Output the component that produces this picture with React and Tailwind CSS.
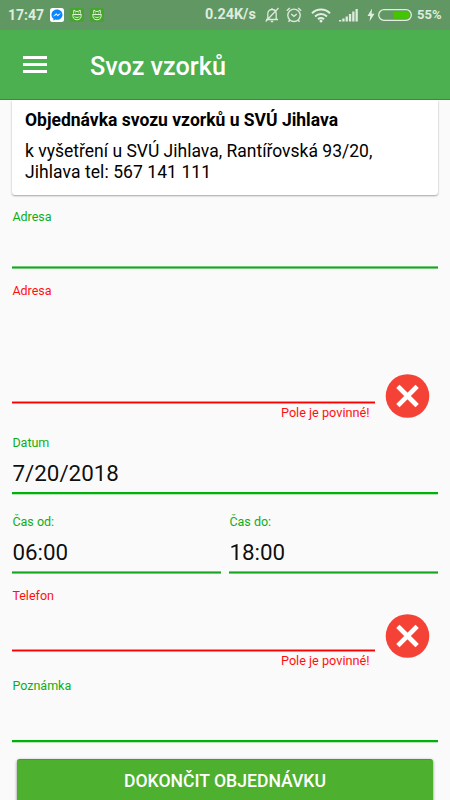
import clsx from "clsx";

function Underline({ error, solid }) {
  return (
    <div
      className={clsx(
        "h-[3px] shrink-0",
        error && "border-y border-[#ff8484] bg-[#ff0000]",
        !error && solid && "border-b border-[#b5e5b7] bg-[#00b00c]",
        !error && !solid && "border-y border-[#72cc77] bg-[#16a51e]"
      )}
    />
  );
}

function Field({ label, value, error, solid, className }) {
  return (
    <div className={clsx("flex flex-col", className)}>
      <span
        className={clsx(
          "h-4 pl-[0.4px] text-[12.5px] leading-4 whitespace-nowrap",
          error ? "text-[#ff1010]" : "text-[#0cae18]"
        )}
      >
        {label}
      </span>
      <div className="flex-1 pt-2 pl-[0.4px] text-[22.4px] leading-7 text-black/95">{value}</div>
      <Underline error={error} solid={solid} />
    </div>
  );
}

function RequiredField({ label, className, iconClassName }) {
  return (
    <div className={clsx("flex items-end", className)}>
      <div className="flex h-full w-[363px] flex-col">
        <Field label={label} error className="flex-1" />
        <span className="h-[18px] pr-[5.5px] text-right text-[12.7px] leading-[18px] text-[#ff1010]">
          Pole je povinné!
        </span>
      </div>
      <svg viewBox="-0.5 0 45 44" className={clsx("ml-[10px] h-11 w-[45px]", iconClassName)}>
        <circle cx="22" cy="22" r="21.8" fill="#f44336" />
        <path
          d="M14 14l16 16M30 14L14 30"
          stroke="#fff"
          strokeWidth="4.6"
          strokeLinecap="square"
          strokeLinejoin="round"
        />
      </svg>
    </div>
  );
}

function MessengerIcon() {
  return (
    <svg viewBox="0 0 14 14" className="h-[14px] w-[14px]">
      <rect width="14" height="14" rx="2.5" fill="#fff" />
      <path
        d="M7 1.5C3.8 1.5 1.5 3.8 1.5 6.7c0 1.6.7 3 1.9 3.9v2l1.9-1c.5.2 1.1.2 1.7.2 3.2 0 5.5-2.3 5.5-5.1S10.200 1.500 7 1.500z"
        fill="#0a84ff"
      />
      <path d="M3.500 8.200L6.100 5.500l1.600 1.400 2.800-1.500L7.900 8.100 6.400 6.700z" fill="#fff" stroke="#fff" strokeWidth=".4" />
    </svg>
  );
}

function CatIcon() {
  return (
    <svg viewBox="0 0 14 14" className="h-[14px] w-[14px]" fill="none" stroke="#e3f3da">
      <rect width="14" height="14" rx="2" fill="#45a52e" stroke="none" />
      <path d="M3.600 5.500L3.900 2l1.900 1.400h2.400L10.100 2l.3 3.500" />
      <path d="M2.500 6.500h9M3 6.500c-.6 3 .8 5.300 4 5.300s4.600-2.300 4-5.300" />
      <path d="M4.500 8.800c1.500.9 3.500.9 5 0" strokeWidth=".9" />
      <path d="M5 5h.8M8.200 5H9" strokeWidth=".8" />
    </svg>
  );
}

function BellOffIcon() {
  return (
    <svg viewBox="0 0 14 16" className="h-4 w-[14px]" fill="none" stroke="#dce9dc" strokeWidth="1.300">
      <path d="M1 12.500h12M2.800 12.500V6.800C2.800 4.300 4.500 2.500 7 2.500s4.200 1.800 4.200 4.300v5.700M5.800 14.500h2.400M7 2.500V1M13.500 1L.7 14.500" />
    </svg>
  );
}

function AlarmIcon() {
  return (
    <svg viewBox="0 0 16 16" className="h-4 w-4" fill="none" stroke="#dce9dc" strokeWidth="1.400">
      <circle cx="8" cy="8.300" r="6.200" />
      <path d="M5.200 7l2.800 2.300L10.800 7M.8 3.800L3.800 1M15.200 3.800L12.200 1M3.900 13l-1.400 1.800M12.100 13l1.400 1.800" />
    </svg>
  );
}

function WifiIcon() {
  return (
    <svg viewBox="0 0 20 15" className="h-[15px] w-5" fill="none" stroke="#e3eee3" strokeWidth="2">
      <path d="M1 5.300c5-5 13-5 18 0M4 8.500c3.400-3.300 8.600-3.300 12 0M7 11.300c1.700-1.600 4.300-1.600 6 0" />
      <circle cx="10" cy="13" r="1.500" fill="#e3eee3" stroke="none" />
    </svg>
  );
}

function SignalIcon() {
  return (
    <svg viewBox="0 0 19 14" className="h-[14px] w-[19px]" fill="#e0ece0">
      <path d="M0 12h2.300v1.500H0zM3.300 10.500h2.300v3H3.300zM6.600 8.500h2.300v5H6.600zM9.900 6h2.300v7.500H9.900zM13.200 3.500h2.300v10h-2.300zM16.500 1h2.300v12.500h-2.300z" />
    </svg>
  );
}

function StatusBar() {
  return (
    <div className="flex h-[30px] shrink-0 items-center bg-[#619763] text-[#dfebdf] *:shrink-0">
      <span className="ml-[8px] w-[42px] text-[14px] font-bold">17:47</span>
      <MessengerIcon />
      <span className="ml-[6px]"><CatIcon /></span>
      <span className="ml-[6px]"><CatIcon /></span>
      <span className="ml-[101px] w-[53px] text-[14.400px] font-bold whitespace-nowrap">0.24K/s</span>
      <span className="ml-[7px]"><BellOffIcon /></span>
      <span className="ml-[7px]"><AlarmIcon /></span>
      <span className="ml-[9px]"><WifiIcon /></span>
      <span className="ml-[8px]"><SignalIcon /></span>
      <svg viewBox="0 0 8 14" className="ml-[9px] h-[14px] w-2" fill="#e3eee3">
        <path d="M5 .5L.5 8h2.800L2.500 13.500 7.500 5.800H4.600z" />
      </svg>
      <svg viewBox="0 0 34 12" className="ml-[3px] h-3 w-[34px]">
        <rect x=".7" y=".7" width="32.600" height="10.600" rx="5.300" fill="none" stroke="#e3eee3" strokeWidth="1.300" />
        <path d="M15.500 2.300H28a3.700 3.700 0 0 1 0 7.400H15.500z" fill="#43c500" />
      </svg>
      <span className="ml-[5px] text-[13px] font-bold">55%</span>
    </div>
  );
}

export default function App() {
  return (
    <div className="flex h-[800px] w-[450px] flex-col overflow-hidden bg-[#fafafa] font-['Roboto',sans-serif]">
      <StatusBar />
      <header className="flex h-[70px] shrink-0 items-center border-b border-[#1ea022] bg-[#4caf50]">
        <div className="ml-[23px] flex w-6 flex-col gap-1">
          <div className="h-[3px] bg-white" />
          <div className="h-[3px] bg-white" />
          <div className="h-[3px] bg-white" />
        </div>
        <h1 className="ml-[43px] pt-[5px] text-[25.200px] leading-8 font-medium text-white">Svoz vzorků</h1>
      </header>

      <main className="flex flex-col px-3">
        <section className="h-[95px] shrink-0 rounded-b-[3px] bg-white px-[13px] pt-2 text-black shadow-[0_1px_2px_rgba(0,0,0,0.35)]">
          <h2 className="text-[17.500px] leading-6 font-bold whitespace-nowrap">
            Objednávka svozu vzorků u SVÚ Jihlava
          </h2>
          <p className="mt-[9px] text-[17.500px] leading-[20.500px] whitespace-nowrap">
            k vyšetření u SVÚ Jihlava, Rantířovská 93/20,
            <br />
            <span className="tracking-[0.07px]">Jihlava tel: 567 141 111</span>
          </p>
        </section>

        <form className="flex w-[426px] flex-col">
          <Field label="Adresa" className="mt-[14px] h-[60px]" />
          <RequiredField label="Adresa" className="mt-[14px] h-[139px]" iconClassName="mb-1" />
          <Field label="Datum" value="7/20/2018" solid className="mt-[13px] h-[60px]" />
          <div className="mt-[19px] flex h-[60px] gap-2">
            <Field label="Čas od:" value="06:00" className="w-[209px]" />
            <Field label="Čas do:" value="18:00" className="w-[209px]" />
          </div>
          <RequiredField label="Telefon" className="mt-[14px] h-[82px]" iconClassName="mb-3" />
          <Field label="Poznámka" solid className="mt-[8px] h-[65px]" />
          <button
            type="button"
            className="mx-[5px] mt-[16px] h-12 rounded-[3px] border-t border-[#2eac10] bg-[#4db02f] pb-1 text-[17.600px] font-medium text-white shadow-[0_1px_3px_rgba(0,0,0,0.5)]"
          >
            DOKONČIT OBJEDNÁVKU
          </button>
        </form>
      </main>
    </div>
  );
}
